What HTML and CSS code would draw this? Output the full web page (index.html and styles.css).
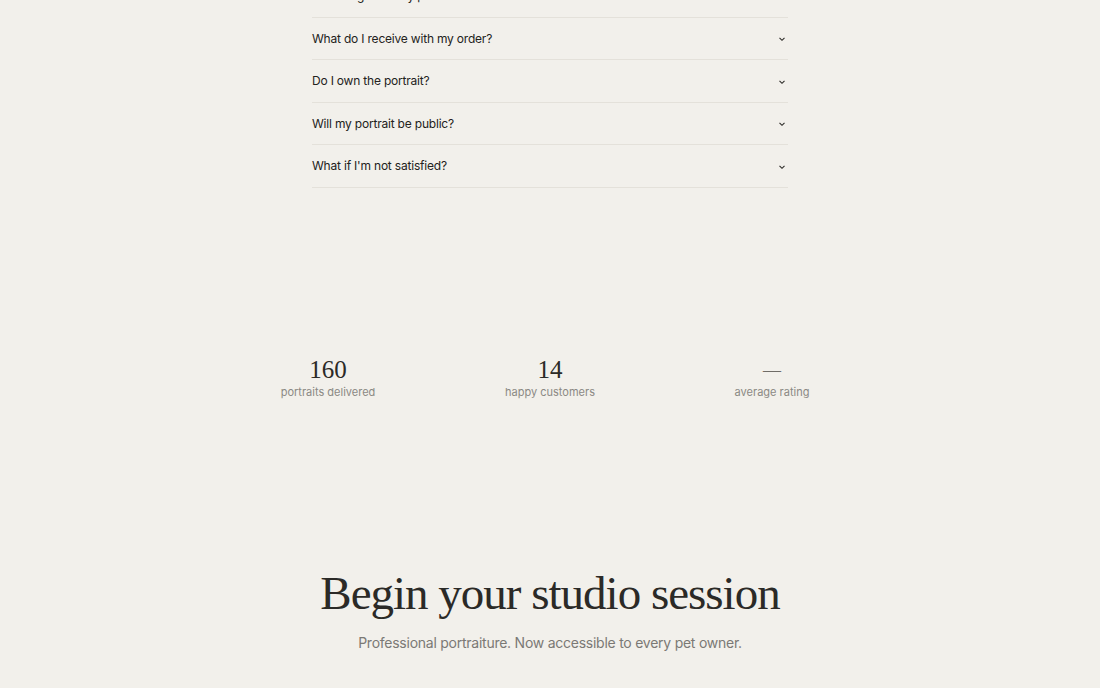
FILE: index.html
```html
<!DOCTYPE html>
<html lang="en">
<head>
    <meta charset="UTF-8">
    <meta name="viewport" content="width=device-width, initial-scale=1.0">
    <title>Studio Portraits</title>
    <link rel="stylesheet" href="styles.css">
</head>
<body>
    <!-- FAQ -->
    <section class="faq">
        <div class="faq-item">
            <span class="faq-q">How long does my portrait take?</span>
            <svg class="chevron" viewBox="0 0 10 10"><path d="M2.5 3.8l2.5 2.5 2.5-2.5"/></svg>
        </div>
        <div class="faq-item">
            <span class="faq-q">What do I receive with my order?</span>
            <svg class="chevron" viewBox="0 0 10 10"><path d="M2.5 3.8l2.5 2.5 2.5-2.5"/></svg>
        </div>
        <div class="faq-item">
            <span class="faq-q">Do I own the portrait?</span>
            <svg class="chevron" viewBox="0 0 10 10"><path d="M2.5 3.8l2.5 2.5 2.5-2.5"/></svg>
        </div>
        <div class="faq-item">
            <span class="faq-q">Will my portrait be public?</span>
            <svg class="chevron" viewBox="0 0 10 10"><path d="M2.5 3.8l2.5 2.5 2.5-2.5"/></svg>
        </div>
        <div class="faq-item">
            <span class="faq-q">What if I'm not satisfied?</span>
            <svg class="chevron" viewBox="0 0 10 10"><path d="M2.5 3.8l2.5 2.5 2.5-2.5"/></svg>
        </div>
    </section>

    <!-- Stats -->
    <section class="stats">
        <div class="stat">
            <div class="stat-num">160</div>
            <div class="stat-label">portraits delivered</div>
        </div>
        <div class="stat">
            <div class="stat-num">14</div>
            <div class="stat-label">happy customers</div>
        </div>
        <div class="stat">
            <div class="stat-num stat-empty">&mdash;</div>
            <div class="stat-label">average rating</div>
        </div>
    </section>

    <!-- Call to action -->
    <section class="cta">
        <h2>Begin your studio session</h2>
        <p>Professional portraiture. Now accessible to every pet owner.</p>
    </section>
</body>
</html>
```

FILE: styles.css
```css
body {
    font-family: Inter, "Noto Sans", sans-serif;
    margin: 0;
    padding: 0;
    background-color: #f2f0eb;
    color: #2b2a27;
}
.faq {
    width: 476px;
    margin: -25px auto 0;
}
.faq-item {
    display: flex;
    align-items: center;
    justify-content: space-between;
    height: 41.5px;
    border-bottom: 1px solid #e4e1da;
    font-size: 12px;
}
.faq-q {
    letter-spacing: -0.2px;
    color: #232220;
}
.chevron {
    width: 10px;
    height: 10px;
    margin-right: 1px;
    margin-top: 2px;
    fill: none;
    stroke: #2b2a27;
    stroke-width: 1.1;
}
.stats {
    display: grid;
    grid-template-columns: repeat(3, 222px);
    justify-content: center;
    margin-top: 168px;
    text-align: center;
}
.stat-num {
    font-family: "Liberation Serif", "DejaVu Serif", serif;
    font-size: 25px;
    line-height: 28px;
    color: #2b2a27;
}
.stat-empty {
    font-size: 18px;
    color: #6f6c67;
}
.stat-label {
    font-size: 11px;
    line-height: 16px;
    color: #8b8984;
}
.cta {
    text-align: center;
    margin-top: 163px;
}
.cta h2 {
    font-family: "Liberation Serif", "DejaVu Serif", serif;
    font-weight: 400;
    font-size: 47px;
    line-height: 60px;
    letter-spacing: -1px;
    margin: 0;
    color: #2b2a27;
}
.cta p {
    margin: 11px 0 0;
    font-size: 14px;
    line-height: 17px;
    letter-spacing: -0.25px;
    color: #7b7975;
}
```
